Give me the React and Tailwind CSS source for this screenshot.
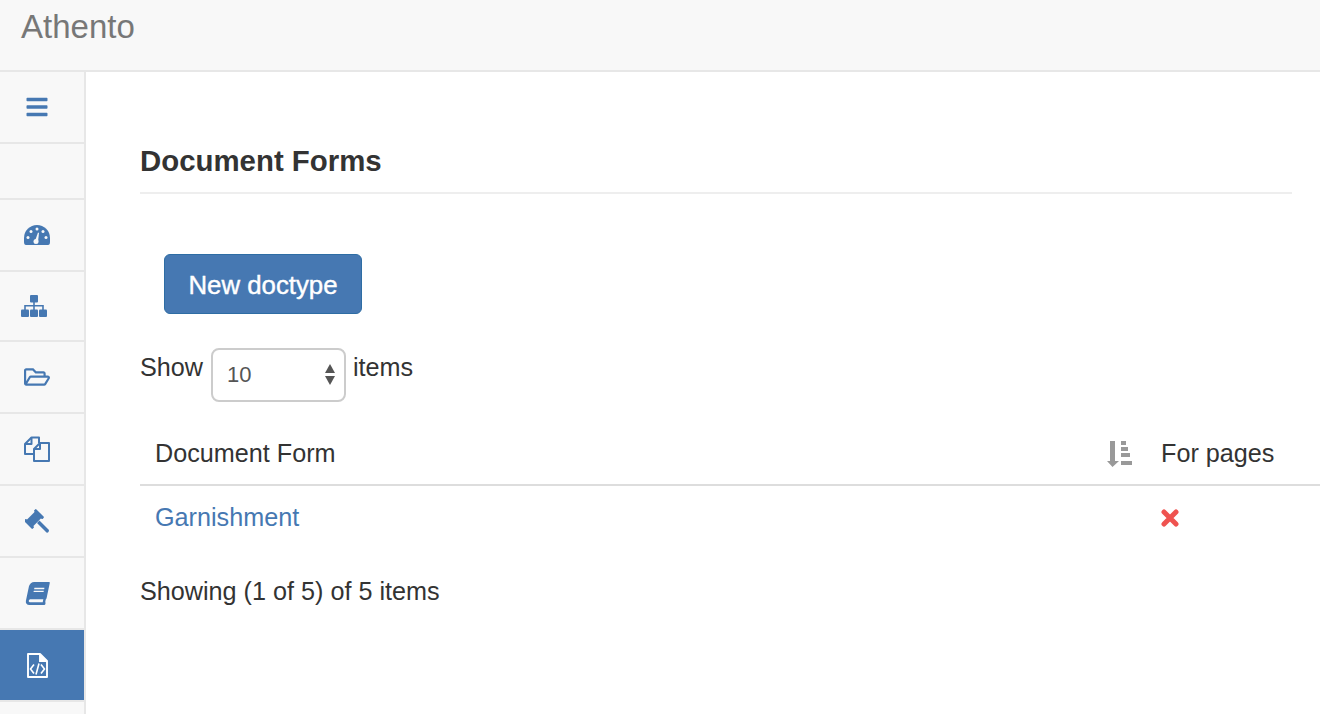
import { FaBars, FaRegFolderOpen, FaBook } from "react-icons/fa";

function GaugeIcon({ className }) {
  return (
    <svg viewBox="0 0 26 20" className={className}>
      <path fill="currentColor" d="M2 20Q0 20 0 17V13A13 13 0 0 1 26 13V17Q26 20 24 20Z" />
      <g fill="#f8f8f8">
        <circle cx="4" cy="12.500" r="1.500" />
        <circle cx="7" cy="6.500" r="1.500" />
        <circle cx="13" cy="4" r="1.500" />
        <circle cx="19" cy="6.500" r="1.500" />
        <circle cx="22" cy="12.500" r="1.500" />
        <circle cx="12" cy="16.500" r="2.500" />
        <path d="M11 16L14 7.500L15 8L14 17Z" />
      </g>
    </svg>
  );
}

function SitemapIcon({ className }) {
  return (
    <svg viewBox="0 0 26 22" className={className} fill="currentColor">
      <rect x="9" y="0" width="8" height="7.500" rx="1" />
      <rect x="0" y="14.500" width="8" height="7.500" rx="1" />
      <rect x="9" y="14.500" width="8" height="7.500" rx="1" />
      <rect x="18" y="14.500" width="8" height="7.500" rx="1" />
      <path d="M12.200 6H13.800V10H22.800V16H21.200V11.500H13.800V16H12.200V11.500H4.800V16H3.200V10H12.200Z" />
    </svg>
  );
}

function FilesIcon({ className }) {
  return (
    <svg viewBox="0 0 26 26" className={className} fill="none" stroke="currentColor" strokeWidth="2" strokeLinejoin="round">
      <path d="M15 7V1.500H7.500L1 8V18H10" />
      <path d="M7.500 1.500V8H1" />
      <path d="M16 7H25V25H10V13Z" />
      <path d="M16 7V13H10" />
    </svg>
  );
}

function GavelIcon({ className }) {
  return (
    <svg viewBox="0 0 24 24" className={className} fill="currentColor">
      <g transform="rotate(-45 9 10)">
        <rect x="2" y="5.500" width="14" height="9" />
        <rect x="0.500" y="4" width="3" height="12" rx="1" />
        <rect x="14.500" y="4" width="3" height="12" rx="1" />
      </g>
      <path d="M12 14L21.500 23.500Q22.500 24 23.500 23L24 21.500Q24 20.500 23 20L14.500 11.500Z" />
    </svg>
  );
}

function CodeFileIcon({ className }) {
  return (
    <svg viewBox="0 0 21 25" className={className} fill="none" stroke="currentColor" strokeWidth="1.900">
      <path d="M1 1H13L20 8V24H1Z" strokeLinejoin="round" />
      <path d="M13 1V8H20" fill="currentColor" />
      <path d="M7 11.500L3.500 16L7 20.500M14 11.500L17.500 16L14 20.500M12 10.500L9 21.500" strokeWidth="1.600" />
    </svg>
  );
}

function SortIcon({ className }) {
  return (
    <svg viewBox="0 0 25 26" className={className} fill="currentColor">
      <path d="M3 0H8V20H12L5.500 26L0 20H3Z" />
      <rect x="14" y="0" width="5" height="4" />
      <rect x="14" y="6" width="7" height="4" />
      <rect x="14" y="12" width="9" height="4" />
      <rect x="14" y="20" width="11" height="4" />
    </svg>
  );
}

const navItems = [
  { icon: GaugeIcon, size: "w-[26px] h-[20px]", height: "h-[72px]" },
  { icon: SitemapIcon, size: "w-[26px] h-[22px] -translate-x-[3px]", height: "h-[70px]" },
  { icon: FaRegFolderOpen, size: "text-[26px]", height: "h-[72px]" },
  { icon: FilesIcon, size: "w-[26px] h-[26px]", height: "h-[72px]" },
  { icon: GavelIcon, size: "w-[24px] h-[24px]", height: "h-[72px]" },
  { icon: FaBook, size: "text-[23px] -skew-x-12", height: "h-[72px]" },
  { icon: CodeFileIcon, size: "w-[21px] h-[25px]", height: "h-[72px]", active: true },
];

export default function App() {
  return (
    <div className="h-[714px] overflow-hidden bg-white font-['Liberation_Sans',sans-serif] text-[#333]">
      <header className="h-[72px] border-b-2 border-[#e7e7e7] bg-[#f8f8f8] px-[21px] pt-[8px]">
        <span className="text-[33px] leading-[37px] text-[#777]">Athento</span>
      </header>

      <div className="flex">
        <aside className="h-[642px] w-[86px] shrink-0 border-r-2 border-[#e7e7e7] bg-[#f8f8f8]">
          <div className="flex h-[72px] items-center justify-center border-b-2 border-[#e7e7e7] pr-[10px] text-[#4678b2]">
            <FaBars className="text-[24px]" />
          </div>
          <div className="h-[56px] border-b-2 border-[#e7e7e7]" />
          {navItems.map(({ icon: Icon, size, height, active }, i) => (
            <div
              key={i}
              className={`flex items-center justify-center border-b-2 border-[#e7e7e7] pr-[10px] ${height} ${
                active ? "bg-[#4678b2] text-white" : "text-[#4678b2]"
              }`}
            >
              <Icon className={size} />
            </div>
          ))}
        </aside>

        <main className="min-w-0 flex-1 pl-[54px] pr-[28px]">
          <h2 className="mt-[71px] border-b-2 border-[#eee] pb-[14px] text-[29.400px] font-bold leading-[35px] text-[#333]">
            Document Forms
          </h2>

          <button className="ml-[24px] mt-[60px] block h-[60px] w-[198px] rounded-[6px] border border-[#2e6da4] bg-[#4678b2] pt-[3px] text-[25.800px] font-normal text-white [-webkit-text-stroke:0.4px_white]">
            New doctype
          </button>

          <div className="mt-[34px] flex h-[54px] items-start text-[25.200px] leading-[38px]">
            <span>Show</span>
            <div className="relative ml-[8px] mr-[7px] flex h-[54px] w-[135px] items-center rounded-[8px] border-2 border-[#ccc] pl-[14px] text-[22px] text-[#555]">
              10
              <div className="absolute right-[9px] top-[14px] flex flex-col gap-[3px]">
                <span className="h-0 w-0 border-x-[5px] border-b-[9px] border-x-transparent border-b-[#555]" />
                <span className="h-0 w-0 border-x-[5px] border-t-[9px] border-x-transparent border-t-[#555]" />
              </div>
            </div>
            <span>items</span>
          </div>

          <table className="mt-[22px] w-[1180px] max-w-none text-[25.200px]">
            <thead>
              <tr className="h-[61px] border-b-2 border-[#ddd]">
                <th className="pl-[15px] text-left font-normal">Document Form</th>
                <th className="w-[54px] font-normal">
                  <SortIcon className="h-[26px] w-[25px] text-[#999]" />
                </th>
                <th className="w-[159px] text-left font-normal">For pages</th>
              </tr>
            </thead>
            <tbody>
              <tr className="h-[65px]">
                <td className="pl-[15px] text-[#4678b2]">Garnishment</td>
                <td />
                <td className="text-[#ef5350]">
                  <svg viewBox="0 0 18 18" className="h-[18px] w-[18px]" stroke="currentColor" strokeWidth="5" strokeLinecap="round">
                    <path d="M3 3L15 15M15 3L3 15" />
                  </svg>
                </td>
              </tr>
            </tbody>
          </table>

          <p className="mt-[23px] text-[25.200px] leading-[36px]">Showing (1 of 5) of 5 items</p>
        </main>
      </div>
    </div>
  );
}
